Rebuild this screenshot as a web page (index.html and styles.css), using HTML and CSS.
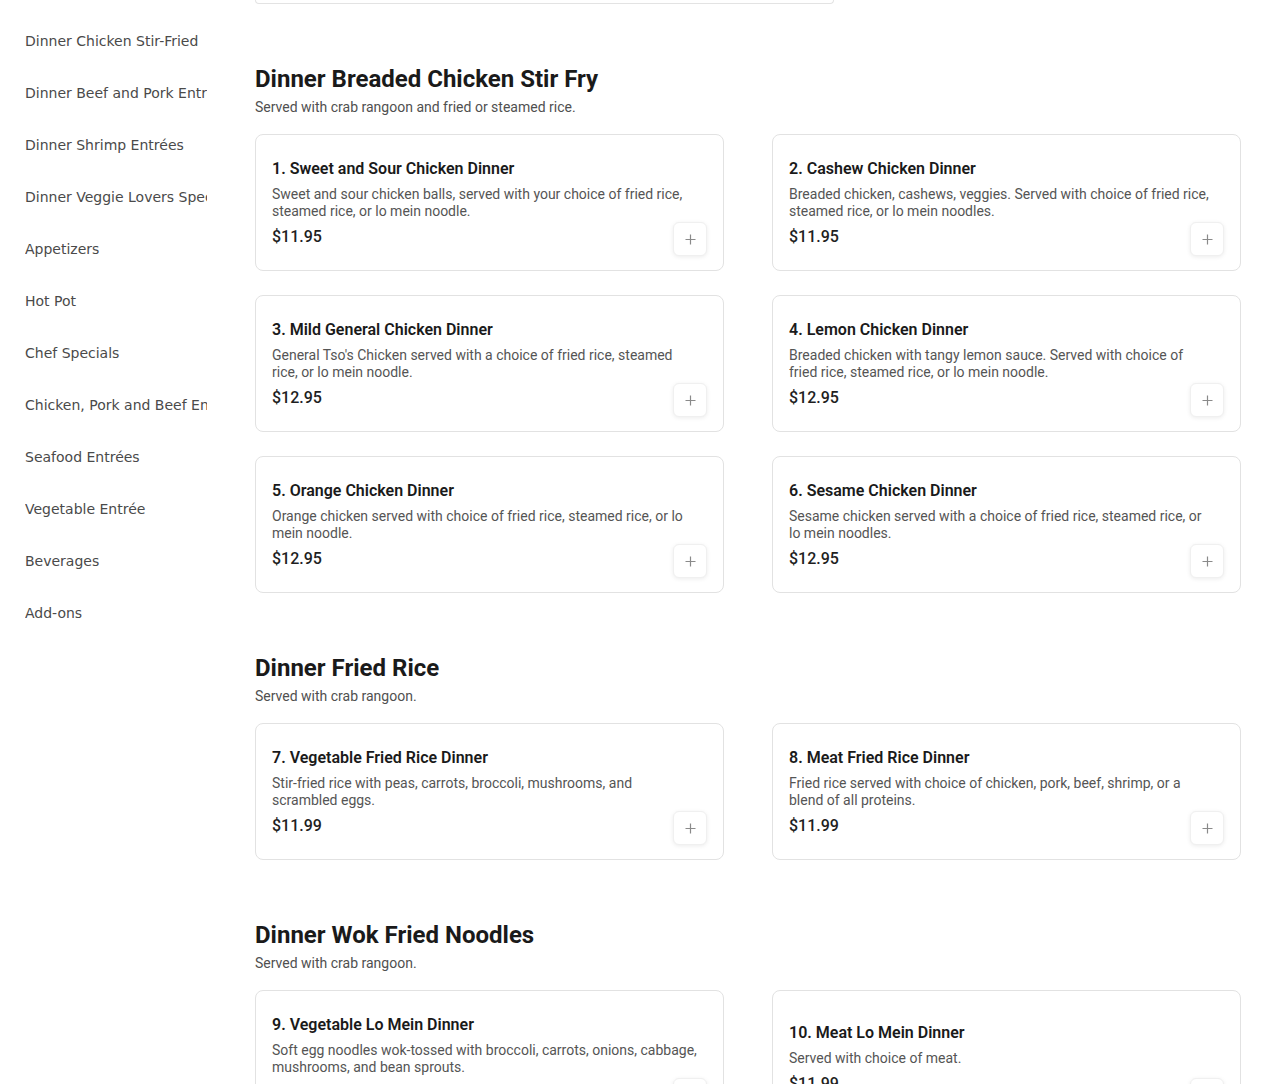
FILE: index.html
```html
<!DOCTYPE html>
<html lang="en">
<head>
<meta charset="utf-8">
<title>Menu</title>
<link rel="stylesheet" href="styles.css">
</head>
<body>
<div class="layout">
  <nav class="sidebar">
    <a class="nav-item">Dinner Chicken Stir-Fried</a>
    <a class="nav-item">Dinner Beef and Pork Entrées</a>
    <a class="nav-item">Dinner Shrimp Entrées</a>
    <a class="nav-item">Dinner Veggie Lovers Special</a>
    <a class="nav-item">Appetizers</a>
    <a class="nav-item">Hot Pot</a>
    <a class="nav-item">Chef Specials</a>
    <a class="nav-item">Chicken, Pork and Beef Entrées</a>
    <a class="nav-item">Seafood Entrées</a>
    <a class="nav-item">Vegetable Entrée</a>
    <a class="nav-item">Beverages</a>
    <a class="nav-item">Add-ons</a>
  </nav>
  <main class="content">
    <div class="prev-card"></div>

    <section class="section">
      <h2 class="section-title">Dinner Breaded Chicken Stir Fry</h2>
      <p class="section-sub">Served with crab rangoon and fried or steamed rice.</p>
      <div class="grid">
        <div class="card">
          <h3 class="item-title">1. Sweet and Sour Chicken Dinner</h3>
          <p class="item-desc">Sweet and sour chicken balls, served with your choice of fried rice, steamed rice, or lo mein noodle.</p>
          <div class="item-price">$11.95</div>
          <button class="add-btn"><svg width="11" height="11" viewBox="0 0 11 11"><path d="M5.5 0.5v10M0.5 5.5h10" stroke="#8a8a8a" stroke-width="1.2" fill="none"/></svg></button>
        </div>
        <div class="card">
          <h3 class="item-title">2. Cashew Chicken Dinner</h3>
          <p class="item-desc">Breaded chicken, cashews, veggies. Served with choice of fried rice, steamed rice, or lo mein noodles.</p>
          <div class="item-price">$11.95</div>
          <button class="add-btn"><svg width="11" height="11" viewBox="0 0 11 11"><path d="M5.5 0.5v10M0.5 5.5h10" stroke="#8a8a8a" stroke-width="1.2" fill="none"/></svg></button>
        </div>
        <div class="card">
          <h3 class="item-title">3. Mild General Chicken Dinner</h3>
          <p class="item-desc">General Tso's Chicken served with a choice of fried rice, steamed rice, or lo mein noodle.</p>
          <div class="item-price">$12.95</div>
          <button class="add-btn"><svg width="11" height="11" viewBox="0 0 11 11"><path d="M5.5 0.5v10M0.5 5.5h10" stroke="#8a8a8a" stroke-width="1.2" fill="none"/></svg></button>
        </div>
        <div class="card">
          <h3 class="item-title">4. Lemon Chicken Dinner</h3>
          <p class="item-desc">Breaded chicken with tangy lemon sauce. Served with choice of fried rice, steamed rice, or lo mein noodle.</p>
          <div class="item-price">$12.95</div>
          <button class="add-btn"><svg width="11" height="11" viewBox="0 0 11 11"><path d="M5.5 0.5v10M0.5 5.5h10" stroke="#8a8a8a" stroke-width="1.2" fill="none"/></svg></button>
        </div>
        <div class="card">
          <h3 class="item-title">5. Orange Chicken Dinner</h3>
          <p class="item-desc">Orange chicken served with choice of fried rice, steamed rice, or lo mein noodle.</p>
          <div class="item-price">$12.95</div>
          <button class="add-btn"><svg width="11" height="11" viewBox="0 0 11 11"><path d="M5.5 0.5v10M0.5 5.5h10" stroke="#8a8a8a" stroke-width="1.2" fill="none"/></svg></button>
        </div>
        <div class="card">
          <h3 class="item-title">6. Sesame Chicken Dinner</h3>
          <p class="item-desc">Sesame chicken served with a choice of fried rice, steamed rice, or lo mein noodles.</p>
          <div class="item-price">$12.95</div>
          <button class="add-btn"><svg width="11" height="11" viewBox="0 0 11 11"><path d="M5.5 0.5v10M0.5 5.5h10" stroke="#8a8a8a" stroke-width="1.2" fill="none"/></svg></button>
        </div>
      </div>
    </section>

    <section class="section">
      <h2 class="section-title">Dinner Fried Rice</h2>
      <p class="section-sub">Served with crab rangoon.</p>
      <div class="grid">
        <div class="card">
          <h3 class="item-title">7. Vegetable Fried Rice Dinner</h3>
          <p class="item-desc">Stir-fried rice with peas, carrots, broccoli, mushrooms, and scrambled eggs.</p>
          <div class="item-price">$11.99</div>
          <button class="add-btn"><svg width="11" height="11" viewBox="0 0 11 11"><path d="M5.5 0.5v10M0.5 5.5h10" stroke="#8a8a8a" stroke-width="1.2" fill="none"/></svg></button>
        </div>
        <div class="card">
          <h3 class="item-title">8. Meat Fried Rice Dinner</h3>
          <p class="item-desc">Fried rice served with choice of chicken, pork, beef, shrimp, or a blend of all proteins.</p>
          <div class="item-price">$11.99</div>
          <button class="add-btn"><svg width="11" height="11" viewBox="0 0 11 11"><path d="M5.5 0.5v10M0.5 5.5h10" stroke="#8a8a8a" stroke-width="1.2" fill="none"/></svg></button>
        </div>
      </div>
    </section>

    <section class="section">
      <h2 class="section-title">Dinner Wok Fried Noodles</h2>
      <p class="section-sub">Served with crab rangoon.</p>
      <div class="grid">
        <div class="card">
          <h3 class="item-title">9. Vegetable Lo Mein Dinner</h3>
          <p class="item-desc">Soft egg noodles wok-tossed with broccoli, carrots, onions, cabbage, mushrooms, and bean sprouts.</p>
          <div class="item-price">$11.99</div>
          <button class="add-btn"><svg width="11" height="11" viewBox="0 0 11 11"><path d="M5.5 0.5v10M0.5 5.5h10" stroke="#8a8a8a" stroke-width="1.2" fill="none"/></svg></button>
        </div>
        <div class="card">
          <h3 class="item-title">10. Meat Lo Mein Dinner</h3>
          <p class="item-desc">Served with choice of meat.</p>
          <div class="item-price">$11.99</div>
          <button class="add-btn"><svg width="11" height="11" viewBox="0 0 11 11"><path d="M5.5 0.5v10M0.5 5.5h10" stroke="#8a8a8a" stroke-width="1.2" fill="none"/></svg></button>
        </div>
      </div>
    </section>
  </main>
</div>
</body>
</html>
```

FILE: styles.css
```css
* { box-sizing: border-box; }
html, body { margin: 0; padding: 0; background: #fff; }
body { font-family: Roboto, "Liberation Sans", sans-serif; color: #1a1a1a; }

.layout {
  display: flex;
  align-items: flex-start;
}

.sidebar {
  width: 207px;
  flex: none;
  padding: 15px 0 0 25px;
  display: flex;
  flex-direction: column;
  overflow: hidden;
}
.nav-item {
  display: flex;
  align-items: center;
  height: 52px;
  font-family: "DejaVu Sans", sans-serif;
  font-size: 14px;
  color: #4a4a4a;
  white-space: nowrap;
  overflow: hidden;
}

.content {
  flex: none;
  width: 986px;
  margin-left: 48px;
}

.prev-card {
  width: 579px;
  height: 4px;
  border: 1px solid #e3e3e3;
  border-top: none;
  border-radius: 0 0 8px 8px;
}

.section { padding-top: 59px; }
.section-title {
  margin: 0;
  font-size: 24px;
  line-height: 32px;
  font-weight: 700;
  color: #1a1a1a;
}
.section-sub {
  margin: 2px 0 0;
  font-size: 14px;
  line-height: 20px;
  color: #505050;
}

.grid {
  margin-top: 17px;
  display: grid;
  grid-template-columns: 1fr 1fr;
  column-gap: 48px;
  row-gap: 24px;
}

.card {
  position: relative;
  min-height: 137px;
  padding: 16px;
  border: 1px solid #e2e2e2;
  border-radius: 8px;
  background: #fff;
  display: flex;
  flex-direction: column;
  justify-content: center;
}
.item-title {
  margin: 0 0 7px;
  font-size: 16px;
  line-height: 20px;
  font-weight: 600;
  color: #1a1a1a;
}
.item-desc {
  margin: 0 0 7px;
  max-width: 425px;
  font-size: 14px;
  line-height: 17px;
  color: #555;
}
.item-price {
  font-size: 16px;
  line-height: 20px;
  font-weight: 500;
  color: #1f1f1f;
}
.add-btn {
  position: absolute;
  right: 16px;
  bottom: 14px;
  width: 34px;
  height: 34px;
  padding: 0;
  border: 1px solid #f0f0f0;
  border-radius: 6px;
  background: #fff;
  box-shadow: 0 1px 4px rgba(0,0,0,0.08);
  display: flex;
  align-items: center;
  justify-content: center;
}
```
